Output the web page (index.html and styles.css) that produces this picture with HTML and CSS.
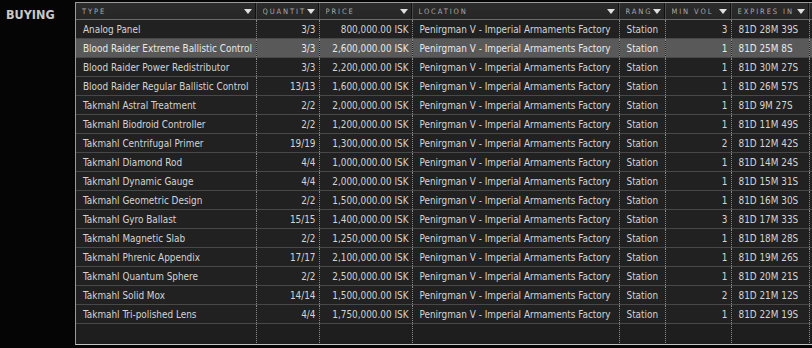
FILE: index.html
```html
<!DOCTYPE html>
<html>
<head>
<meta charset="utf-8">
<link rel="stylesheet" href="styles.css">
</head>
<body>
<div class="page">
  <div class="title">BUYING</div>
  <div class="panel">
    <table class="orders">
      <colgroup>
        <col class="c-type"><col class="c-qty"><col class="c-price"><col class="c-loc"><col class="c-range"><col class="c-min"><col class="c-exp"><col>
      </colgroup>
      <thead>
        <tr>
          <th><span>TYPE</span><i class="arr"></i></th>
          <th><span>QUANTIT</span><i class="arr"></i></th>
          <th><span>PRICE</span><i class="arr"></i></th>
          <th><span>LOCATION</span><i class="arr"></i></th>
          <th><span>RANG</span><i class="arr"></i></th>
          <th><span>MIN VOL</span><i class="arr"></i></th>
          <th><span>EXPIRES IN</span><i class="arr"></i></th>
          <th></th>
        </tr>
      </thead>
      <tbody>
        <tr><td>Analog Panel</td><td class="r">3/3</td><td class="r">800,000.00 ISK</td><td>Penirgman V - Imperial Armaments Factory</td><td>Station</td><td class="r">3</td><td>81D 28M 39S</td><td></td></tr>
        <tr class="sel"><td>Blood Raider Extreme Ballistic Control</td><td class="r">3/3</td><td class="r">2,600,000.00 ISK</td><td>Penirgman V - Imperial Armaments Factory</td><td>Station</td><td class="r">1</td><td>81D 25M 8S</td><td></td></tr>
        <tr><td>Blood Raider Power Redistributor</td><td class="r">3/3</td><td class="r">2,200,000.00 ISK</td><td>Penirgman V - Imperial Armaments Factory</td><td>Station</td><td class="r">1</td><td>81D 30M 27S</td><td></td></tr>
        <tr><td>Blood Raider Regular Ballistic Control</td><td class="r">13/13</td><td class="r">1,600,000.00 ISK</td><td>Penirgman V - Imperial Armaments Factory</td><td>Station</td><td class="r">1</td><td>81D 26M 57S</td><td></td></tr>
        <tr><td>Takmahl Astral Treatment</td><td class="r">2/2</td><td class="r">2,000,000.00 ISK</td><td>Penirgman V - Imperial Armaments Factory</td><td>Station</td><td class="r">1</td><td>81D 9M 27S</td><td></td></tr>
        <tr><td>Takmahl Biodroid Controller</td><td class="r">2/2</td><td class="r">1,200,000.00 ISK</td><td>Penirgman V - Imperial Armaments Factory</td><td>Station</td><td class="r">1</td><td>81D 11M 49S</td><td></td></tr>
        <tr><td>Takmahl Centrifugal Primer</td><td class="r">19/19</td><td class="r">1,300,000.00 ISK</td><td>Penirgman V - Imperial Armaments Factory</td><td>Station</td><td class="r">2</td><td>81D 12M 42S</td><td></td></tr>
        <tr><td>Takmahl Diamond Rod</td><td class="r">4/4</td><td class="r">1,000,000.00 ISK</td><td>Penirgman V - Imperial Armaments Factory</td><td>Station</td><td class="r">1</td><td>81D 14M 24S</td><td></td></tr>
        <tr><td>Takmahl Dynamic Gauge</td><td class="r">4/4</td><td class="r">2,000,000.00 ISK</td><td>Penirgman V - Imperial Armaments Factory</td><td>Station</td><td class="r">1</td><td>81D 15M 31S</td><td></td></tr>
        <tr><td>Takmahl Geometric Design</td><td class="r">2/2</td><td class="r">1,500,000.00 ISK</td><td>Penirgman V - Imperial Armaments Factory</td><td>Station</td><td class="r">1</td><td>81D 16M 30S</td><td></td></tr>
        <tr><td>Takmahl Gyro Ballast</td><td class="r">15/15</td><td class="r">1,400,000.00 ISK</td><td>Penirgman V - Imperial Armaments Factory</td><td>Station</td><td class="r">3</td><td>81D 17M 33S</td><td></td></tr>
        <tr><td>Takmahl Magnetic Slab</td><td class="r">2/2</td><td class="r">1,250,000.00 ISK</td><td>Penirgman V - Imperial Armaments Factory</td><td>Station</td><td class="r">1</td><td>81D 18M 28S</td><td></td></tr>
        <tr><td>Takmahl Phrenic Appendix</td><td class="r">17/17</td><td class="r">2,100,000.00 ISK</td><td>Penirgman V - Imperial Armaments Factory</td><td>Station</td><td class="r">1</td><td>81D 19M 26S</td><td></td></tr>
        <tr><td>Takmahl Quantum Sphere</td><td class="r">2/2</td><td class="r">2,500,000.00 ISK</td><td>Penirgman V - Imperial Armaments Factory</td><td>Station</td><td class="r">1</td><td>81D 20M 21S</td><td></td></tr>
        <tr><td>Takmahl Solid Mox</td><td class="r">14/14</td><td class="r">1,500,000.00 ISK</td><td>Penirgman V - Imperial Armaments Factory</td><td>Station</td><td class="r">2</td><td>81D 21M 12S</td><td></td></tr>
        <tr><td>Takmahl Tri-polished Lens</td><td class="r">4/4</td><td class="r">1,750,000.00 ISK</td><td>Penirgman V - Imperial Armaments Factory</td><td>Station</td><td class="r">1</td><td>81D 22M 19S</td><td></td></tr>
        <tr class="filler"><td></td><td></td><td></td><td></td><td></td><td></td><td></td><td></td></tr>
      </tbody>
    </table>
  </div>
</div>
</body>
</html>
```

FILE: styles.css
```css
html, body {
  margin: 0;
  padding: 0;
  background: #000;
}
.page {
  width: 812px;
  height: 348px;
  overflow: hidden;
  display: flex;
  align-items: flex-start;
  background: #050505;
}
.title {
  width: 75px;
  flex: none;
  padding: 7px 0 0 6px;
  box-sizing: border-box;
  font-family: "DejaVu Sans Condensed", "DejaVu Sans", sans-serif;
  font-stretch: condensed;
  font-weight: bold;
  font-size: 12.5px;
  letter-spacing: 0;
  color: #c8c8c8;
}
.panel {
  margin-top: 2px;
  width: 760px;
  flex: none;
  height: 343px;
  box-sizing: border-box;
  border: 1px solid #9a9a9a;
  border-bottom-color: #c4c4c4;
  border-right: none;
  background: #1e1e1e;
  overflow: hidden;
}
.orders {
  border-collapse: collapse;
  table-layout: fixed;
  width: 759px;
  font-family: "DejaVu Sans Condensed", "DejaVu Sans", sans-serif;
  font-stretch: condensed;
  font-size: 9.9px;
  color: #d4d4d4;
}
.c-type { width: 180px; }
.c-qty { width: 63px; }
.c-price { width: 93px; }
.c-loc { width: 207px; }
.c-range { width: 46px; }
.c-min { width: 66px; }
.c-exp { width: 78px; }

thead th {
  height: 16px;
  padding: 0 9px 0 6px;
  position: relative;
  text-align: left;
  font-weight: normal;
  font-family: "DejaVu Sans", sans-serif;
  font-size: 7.5px;
  letter-spacing: 1.9px;
  color: #a8a8a8;
  background: linear-gradient(#2c2c2c, #262626);
  border-bottom: 1px solid #6a6a6a;
  border-right: 1px solid #4a4a4a;
  box-shadow: inset -1px 0 0 #111;
  white-space: nowrap;
  overflow: hidden;
}
thead th span {
  display: block;
  overflow: hidden;
}
.arr {
  position: absolute;
  right: 4px;
  top: 6px;
  width: 0;
  height: 0;
  border-left: 4px solid transparent;
  border-right: 4px solid transparent;
  border-top: 5px solid #e0e0e0;
}
tbody td {
  height: 18px;
  padding: 0 3px 0 7px;
  border-bottom: 1px solid #484848;
  border-right: 1px dotted #8a8a8a;
  white-space: nowrap;
  overflow: hidden;
  background: #212121;
}
tbody td.r {
  text-align: right;
  padding: 0 3px 0 2px;
}
tbody tr.sel td {
  background: #595959;
  color: #e8e8e8;
}
tbody tr.filler td {
  height: 21px;
  border-bottom: none;
  background: #1e1e1e;
}
tbody tr td:last-child,
thead tr th:last-child {
  border-right: none;
}
```
